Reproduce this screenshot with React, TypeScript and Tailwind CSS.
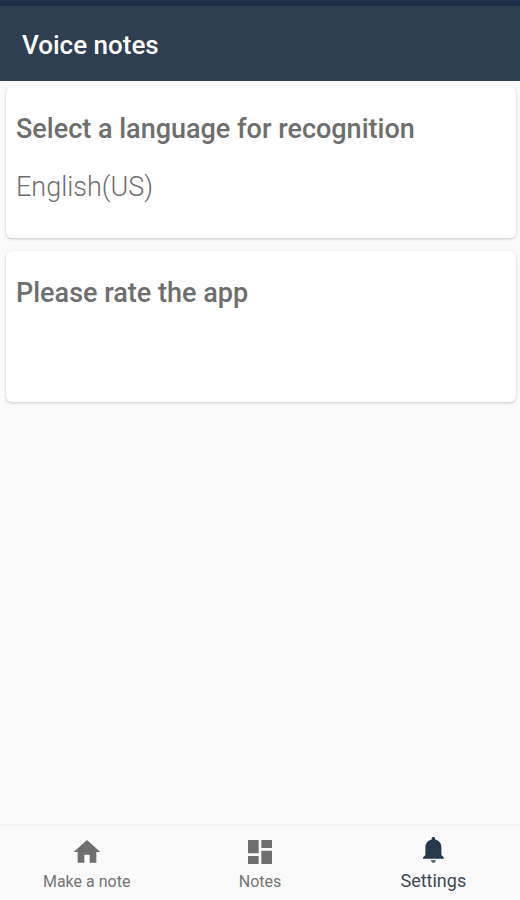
import { MdDashboard, MdHome } from "react-icons/md";

const BellIcon = ({ className }: { className?: string }) => (
  <svg viewBox="0 0 24 24" fill="currentColor" aria-hidden="true" className={className}>
    <path d="M12.3 2.2c-.8 0-1.3.5-1.3 1.3v.6C8.200 4.700 6.300 7 6.300 10v5.700L4.500 17.600v1h15.600v-1l-1.800-1.900V10c0-3-1.900-5.300-4.700-5.900v-.6c0-.8-.5-1.300-1.300-1.300z" />
    <path opacity="0.75" d="M10.500 19.500h3.600c0 1.300-.8 2.200-1.800 2.200s-1.800-.9-1.800-2.200z" />
  </svg>
);

const tabs = [
  { label: "Make a note", icon: MdHome, active: false },
  { label: "Notes", icon: MdDashboard, active: false },
  { label: "Settings", icon: BellIcon, active: true },
];

const SettingCard = ({ title, value }: { title: string; value?: string }) => {
  return (
    <button
      type="button"
      className="flex min-h-[151px] w-full flex-col items-start gap-7 rounded-md bg-white px-[10px] pt-[27px] pb-6 text-left text-[27px] leading-[30px] text-[#6e6e6e] shadow-[0_1px_3px_rgba(0,0,0,0.2)]"
    >
      <span className="font-medium">{title}</span>
      {value && <span className="font-light">{value}</span>}
    </button>
  );
};

const App = () => {
  return (
    <div className="flex min-h-screen flex-col bg-[#fafafa] font-['Roboto',sans-serif]">
      <header className="border-t-6 border-[#1d2f49] bg-[#2f3e50] px-[22px] pt-6 pb-5">
        <h1 className="text-[26px] leading-[31px] font-medium text-white">
          Voice notes
        </h1>
      </header>

      <main className="flex grow flex-col gap-[13px] pt-[6px] pr-[4px] pl-[6px]">
        <SettingCard title="Select a language for recognition" value="English(US)" />
        <SettingCard title="Please rate the app" />
      </main>

      <nav className="grid h-[76px] grid-cols-3 border-t-2 border-[#f3f3f3]">
        {tabs.map(({ label, icon: Icon, active }) => (
          <button
            key={label}
            type="button"
            aria-current={active ? "page" : undefined}
            className={
              active
                ? "flex flex-col items-center pt-2 text-lg leading-[30px] text-[#3d4a58]"
                : "flex flex-col items-center pt-[10px] text-base leading-[28px] text-[#757575]"
            }
          >
            <Icon className={active ? "size-8 text-[#26394d]" : "size-8 text-[#6e6e6e]"} />
            <span>{label}</span>
          </button>
        ))}
      </nav>
    </div>
  );
};

export default App;
